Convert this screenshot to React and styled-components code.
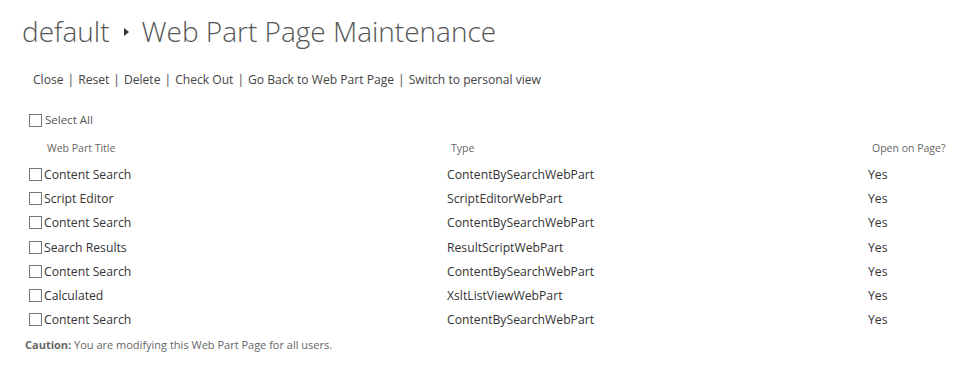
import styled, { createGlobalStyle } from 'styled-components';

const GlobalStyle = createGlobalStyle`
    body {
        margin: 0;
        background: #fff;
        font-family: "Open Sans", "Noto Sans", sans-serif;
        color: #444;
    }
`;

const parts = [
    { title: 'Content Search', type: 'ContentBySearchWebPart' },
    { title: 'Script Editor', type: 'ScriptEditorWebPart' },
    { title: 'Content Search', type: 'ContentBySearchWebPart' },
    { title: 'Search Results', type: 'ResultScriptWebPart' },
    { title: 'Content Search', type: 'ContentBySearchWebPart' },
    { title: 'Calculated', type: 'XsltListViewWebPart' },
    { title: 'Content Search', type: 'ContentBySearchWebPart' },
];

const links = [
    'Close',
    'Reset',
    'Delete',
    'Check Out',
    'Go Back to Web Part Page',
    'Switch to personal view',
];

const App = () => {
    return (
        <Page>
            <GlobalStyle />
            <Title>
                default
                <Arrow />
                Web Part Page Maintenance
            </Title>
            <Links>
                {links.map((l, i) => (
                    <span key={l}>
                        {i > 0 && <Sep>|</Sep>}
                        <Link href='#'>{l}</Link>
                    </span>
                ))}
            </Links>
            <SelectAll>
                <Box />
                Select All
            </SelectAll>
            <Table>
                <Head $pad={18}>Web Part Title</Head>
                <Head $pad={8}>Type</Head>
                <Head $pad={8}>Open on Page?</Head>
                {parts.map((p, i) => (
                    <Row key={i}>
                        <Cell>
                            <Box />
                            {p.title}
                        </Cell>
                        <Cell $pad={4}>{p.type}</Cell>
                        <Cell $pad={4}>Yes</Cell>
                    </Row>
                ))}
            </Table>
            <Caution>
                <b>Caution:</b> You are modifying this Web Part Page for all
                users.
            </Caution>
        </Page>
    );
};

const Page = styled.div`
    padding: 12px 0 0 22px;
`;

const Title = styled.h1`
    margin: 0;
    font-weight: 300;
    font-size: 28px;
    line-height: 38px;
    color: #555;
    display: flex;
    align-items: center;
`;

const Arrow = styled.span`
    display: inline-block;
    width: 0;
    height: 0;
    margin: 2px 13px 0 14px;
    border-top: 4px solid transparent;
    border-bottom: 4px solid transparent;
    border-left: 5px solid #333;
`;

const Links = styled.div`
    margin: 21px 0 0 11px;
    font-size: 12.1px;
    line-height: 18px;
    color: #444;
`;

const Link = styled.a`
    color: #444;
    text-decoration: none;
`;

const Sep = styled.span`
    margin: 0 4px;
`;

const Box = styled.span`
    display: inline-block;
    box-sizing: border-box;
    width: 13px;
    height: 13px;
    border: 1px solid #777;
    background: #fff;
    margin-right: 2px;
    flex-shrink: 0;
`;

const SelectAll = styled.div`
    display: flex;
    align-items: center;
    gap: 1px;
    margin: 23px 0 0 7px;
    font-size: 11.5px;
    line-height: 16px;
    color: #555;
`;

const Table = styled.div`
    display: grid;
    grid-template-columns: 414px 421px auto;
    margin: 12px 0 0 7px;
`;

const Head = styled.div`
    padding-left: ${(p) => p.$pad}px;
    font-size: 10.5px;
    line-height: 16px;
    color: #666;
    padding-bottom: 6px;
`;

const Row = styled.div`
    display: contents;
`;

const Cell = styled.div`
    display: flex;
    align-items: center;
    height: 24.3px;
    padding-left: ${(p) => p.$pad || 0}px;
    font-size: 12.2px;
    color: #333;
`;

const Caution = styled.div`
    margin: 5px 0 0 3px;
    font-size: 11px;
    color: #666;
    b {
        font-weight: 700;
    }
`;

export default App;
